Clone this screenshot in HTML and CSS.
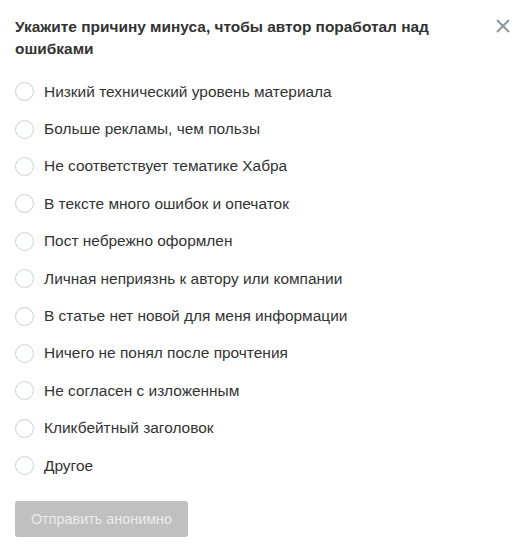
FILE: index.html
```html
<!DOCTYPE html>
<html lang="ru">
<head>
<meta charset="utf-8">
<link rel="stylesheet" href="styles.css">
</head>
<body>
<div class="modal">
  <div class="header">
    <h2 class="title">Укажите причину минуса, чтобы автор поработал над ошибками</h2>
    <button class="close" aria-label="Закрыть">
      <svg width="14" height="14" viewBox="0 0 14 14"><path d="M1 1L13 13M13 1L1 13" stroke="#8e9aa3" stroke-width="2.2" stroke-linecap="butt"/></svg>
    </button>
  </div>
  <ul class="options">
    <li class="option"><span class="radio"></span><span class="label">Низкий технический уровень материала</span></li>
    <li class="option"><span class="radio"></span><span class="label">Больше рекламы, чем пользы</span></li>
    <li class="option"><span class="radio"></span><span class="label">Не соответствует тематике Хабра</span></li>
    <li class="option"><span class="radio"></span><span class="label">В тексте много ошибок и опечаток</span></li>
    <li class="option"><span class="radio"></span><span class="label">Пост небрежно оформлен</span></li>
    <li class="option"><span class="radio"></span><span class="label">Личная неприязнь к автору или компании</span></li>
    <li class="option"><span class="radio"></span><span class="label">В статье нет новой для меня информации</span></li>
    <li class="option"><span class="radio"></span><span class="label">Ничего не понял после прочтения</span></li>
    <li class="option"><span class="radio"></span><span class="label">Не согласен с изложенным</span></li>
    <li class="option"><span class="radio"></span><span class="label">Кликбейтный заголовок</span></li>
    <li class="option"><span class="radio"></span><span class="label">Другое</span></li>
  </ul>
  <button class="submit" disabled>Отправить анонимно</button>
</div>
</body>
</html>
```
FILE: styles.css
```css
html, body {
  margin: 0;
  padding: 0;
  background: #fff;
}
body {
  font-family: "Liberation Sans", Arial, sans-serif;
  color: #333;
}
.modal {
  padding: 16px 11px 0 15px;
}
.header {
  display: flex;
  justify-content: space-between;
  align-items: flex-start;
}
.title {
  margin: 0;
  font-size: 15.45px;
  line-height: 22px;
  font-weight: bold;
  color: #333;
  max-width: 440px;
}
.close {
  border: 0;
  background: none;
  padding: 0;
  margin-top: 3px;
  width: 14px;
  height: 14px;
  display: block;
  cursor: pointer;
}
.close svg { display: block; }
.options {
  list-style: none;
  margin: 13px 0 0;
  padding: 0;
}
.option {
  display: flex;
  align-items: center;
  height: 37.4px;
}
.radio {
  width: 17px;
  height: 17px;
  border: 1px solid #c5d3dc;
  border-radius: 50%;
  flex: none;
  margin-right: 10px;
}
.label {
  font-size: 15.45px;
  line-height: 20px;
  color: #333;
}
.submit {
  margin-top: 17px;
  width: 173px;
  height: 36px;
  border: 0;
  border-radius: 3px;
  background: #c0c0c0;
  color: #ebebeb;
  font-family: "Liberation Sans", Arial, sans-serif;
  font-size: 14.4px;
  padding: 0;
  display: block;
}
```
